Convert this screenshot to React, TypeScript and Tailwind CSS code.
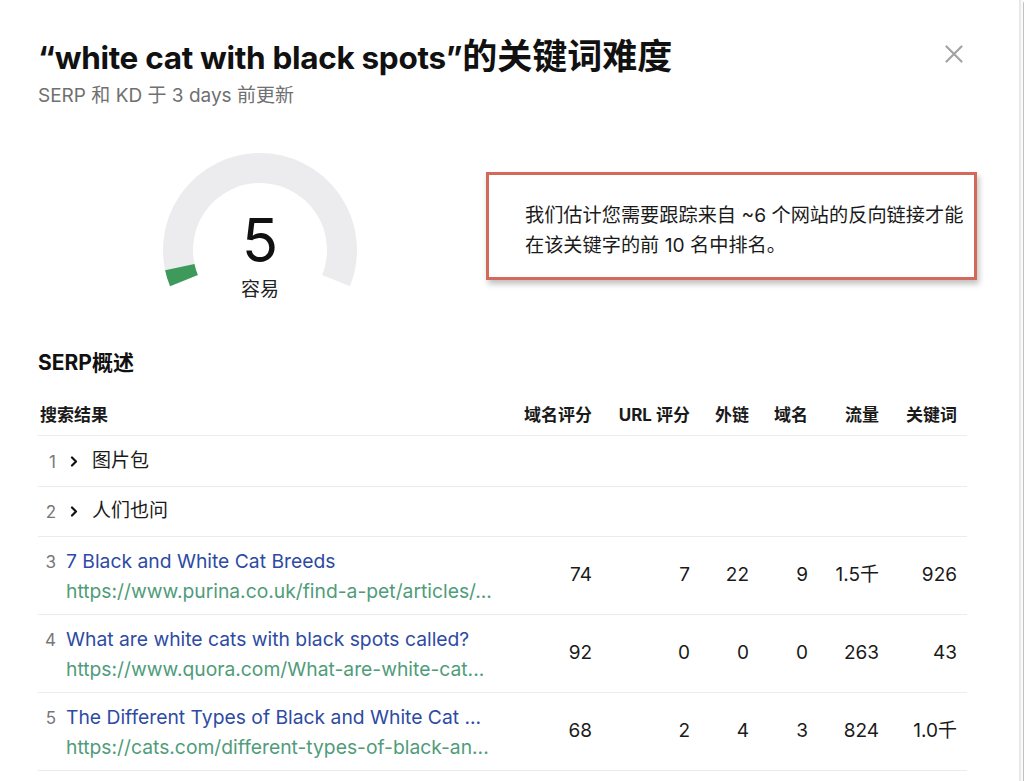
import React from "react";

const FONT = '"Inter", "Noto Sans CJK SC", sans-serif';

type Row =
  | { n: number; kind: "group"; label: string }
  | {
      n: number;
      kind: "link";
      title: string;
      url: string;
      vals: string[];
    };

const rows: Row[] = [
  { n: 1, kind: "group", label: "图片包" },
  { n: 2, kind: "group", label: "人们也问" },
  {
    n: 3,
    kind: "link",
    title: "7 Black and White Cat Breeds",
    url: "https://www.purina.co.uk/find-a-pet/articles/...",
    vals: ["74", "7", "22", "9", "1.5千", "926"],
  },
  {
    n: 4,
    kind: "link",
    title: "What are white cats with black spots called?",
    url: "https://www.quora.com/What-are-white-cat...",
    vals: ["92", "0", "0", "0", "263", "43"],
  },
  {
    n: 5,
    kind: "link",
    title: "The Different Types of Black and White Cat ...",
    url: "https://cats.com/different-types-of-black-an...",
    vals: ["68", "2", "4", "3", "824", "1.0千"],
  },
];

const headers = ["域名评分", "URL 评分", "外链", "域名", "流量", "关键词"];

function Gauge() {
  return (
    <div className="relative w-[200px] h-[152px]">
      <svg width="200" height="140" viewBox="0 0 200 140" className="block">
        <path
          d="M 23.97 130.72 A 82 82 0 1 1 176.03 130.72"
          fill="none"
          stroke="#ececee"
          strokeWidth="30"
        />
        <path
          d="M 23.97 130.72 A 82 82 0 0 1 19.79 117.05"
          fill="none"
          stroke="#3e9a5b"
          strokeWidth="30"
        />
      </svg>
      <div className="absolute left-0 right-0 top-[52px] flex flex-col items-center">
        <div className="text-[60px] leading-[76px] text-[#111] font-normal">5</div>
      </div>
      <div className="absolute left-0 right-0 top-[127px] text-center text-[19px] leading-[26px] text-[#222]">
        容易
      </div>
    </div>
  );
}

function Chevron() {
  return (
    <svg width="8" height="11" viewBox="0 0 8 11" className="block">
      <path d="M2 1.5 L6 5.5 L2 9.5" fill="none" stroke="#111" strokeWidth="2.2" strokeLinecap="round" strokeLinejoin="round" />
    </svg>
  );
}

export default function App() {
  return (
    <div className="flex w-[1024px] h-[781px] bg-white overflow-hidden" style={{ fontFamily: FONT }}>
      <div className="flex-1 pl-[38px] pr-[42px] pt-[37px]">
        {/* Header */}
        <div className="flex items-start justify-between">
          <div>
            <h1 className="text-[31.5px] leading-[38px] font-bold text-[#111] tracking-[-0.01em] whitespace-nowrap">
              “white cat with black spots”<span className="text-[35px] tracking-normal">的关键词难度</span>
            </h1>
            <div className="mt-[7px] text-[19px] leading-6 text-[#707070]">SERP 和 KD 于 3 days 前更新</div>
          </div>
          <button className="mt-[7px] mr-[13px] w-[20px] h-[20px] flex items-center justify-center">
            <svg width="18" height="18" viewBox="0 0 18 18">
              <path d="M1.5 1.5 L16.5 16.5 M16.5 1.5 L1.5 16.5" stroke="#a3a3a3" strokeWidth="2.2" strokeLinecap="round" />
            </svg>
          </button>
        </div>

        {/* Gauge + message */}
        <div className="flex items-start mt-[42px] pl-[122px]">
          <Gauge />
          <div className="ml-[126px] mt-[22px] w-[491px] h-[108px] border-[3px] border-[#d4685b] bg-white shadow-[2px_4px_6px_rgba(0,0,0,0.25)] pl-[36px] pt-[25px] text-[19.2px] leading-[30px] text-[#1a1a1a] whitespace-nowrap">
            <p>我们估计您需要跟踪来自 ~6 个网站的反向链接才能</p>
            <p>在该关键字的前 10 名中排名。</p>
          </div>
        </div>

        {/* SERP overview */}
        <h2 className="mt-[47px] text-[21px] leading-[28px] font-bold text-[#111]">SERP概述</h2>

        <div className="mt-[19px] w-[929px]">
          <div className="grid grid-cols-[466px_98px_98px_59px_59px_71px_78px] h-[40px] items-center border-b border-[#ececec] text-[17px] font-bold text-[#1a1a1a]">
            <div className="pl-[2px]">搜索结果</div>
            {headers.map((h) => (
              <div key={h} className="text-right pr-[10px] whitespace-nowrap">
                {h}
              </div>
            ))}
          </div>

          {rows.map((r) =>
            r.kind === "group" ? (
              <div
                key={r.n}
                className={`flex items-center border-b border-[#ececec] ${r.n === 1 ? "h-[51px]" : "h-[50px]"}`}
              >
                <div className="w-[18px] text-right text-[17px] text-[#777] pt-[3px]">{r.n}</div>
                <div className="ml-[14px]">
                  <Chevron />
                </div>
                <div className="ml-[14px] text-[19px] text-[#1a1a1a]">{r.label}</div>
              </div>
            ) : (
              <div
                key={r.n}
                className="grid grid-cols-[466px_98px_98px_59px_59px_71px_78px] h-[78px] items-center border-b border-[#ececec]"
              >
                <div className="flex">
                  <div className="w-[18px] text-right text-[17px] leading-[30px] text-[#777] pt-[1px]">{r.n}</div>
                  <div className="ml-[10px] text-[19.3px] leading-[30px] whitespace-nowrap">
                    <div className="text-[#2d4ba3]">{r.title}</div>
                    <div className="text-[#4f9c7a]">{r.url}</div>
                  </div>
                </div>
                {r.vals.map((v, i) => (
                  <div key={i} className="text-right pr-[10px] text-[19px] text-[#1a1a1a]">
                    {v}
                  </div>
                ))}
              </div>
            )
          )}
        </div>
      </div>

      {/* Scrollbar */}
      <div className="w-[15px] h-full border-l-2 border-[#e8e8e8] pl-[2px] bg-[#fafafa]">
        <div className="w-full h-full mt-[2px] bg-[#c1c1c1] rounded-t-[5px]"></div>
      </div>
    </div>
  );
}
